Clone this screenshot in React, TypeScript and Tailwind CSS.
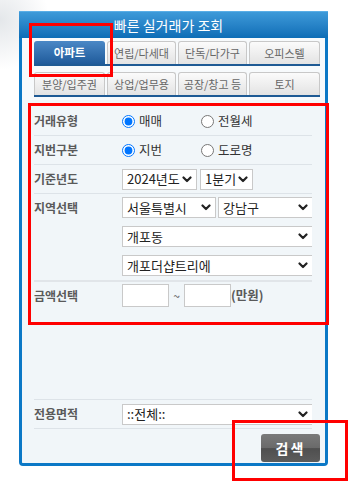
import { useState } from 'react';

const TABS = [
  ['아파트', '연립/다세대', '단독/다가구', '오피스텔'],
  ['분양/입주권', '상업/업무용', '공장/창고 등', '토지'],
];

function Chevron() {
  return (
    <svg width="10" height="7" viewBox="0 0 10 7" className="shrink-0">
      <polyline points="1.5,1.5 5,5 8.5,1.5" fill="none" stroke="#222" strokeWidth="2.2" strokeLinecap="round" strokeLinejoin="round" />
    </svg>
  );
}

function Select({ value, className }: { value: string; className: string }) {
  return (
    <div className={`h-[21px] bg-white border border-[#c9c9c9] flex items-center justify-between pl-[4px] pr-[4px] text-[13px] text-[#222] ${className}`}>
      <span className="truncate">{value}</span>
      <Chevron />
    </div>
  );
}

function Radio({ label, checked, name }: { label: string; checked?: boolean; name: string }) {
  return (
    <label className="flex items-center gap-[4px] text-[12.5px] text-[#333] w-[79px]">
      <input type="radio" name={name} defaultChecked={checked} className="w-[13px] h-[13px] m-0 accent-[#0075ff]" />
      <span>{label}</span>
    </label>
  );
}

export default function App() {
  const [tab] = useState('아파트');

  return (
    <div
      className="relative w-[351px] h-[481px] bg-white overflow-hidden pt-[11px]"
      style={{ fontFamily: '"Noto Sans CJK KR", "Noto Sans", sans-serif' }}
    >
      <div className="absolute left-0 top-0 w-[50px] h-[70px] bg-[radial-gradient(ellipse_at_0_20px,#e4e7ea,transparent_70%)]" />

      {/* panel */}
      <div className="relative ml-[19px] w-[309px] border-x-[3px] border-b-[3px] border-[#0b78c6] rounded-b-[4px] bg-[#f1f6f9]">
        <div className="-mx-[3px] h-[27px] bg-gradient-to-b from-[#3d9ad9] to-[#0c6db6] border-t border-[#5aaee6] flex items-center justify-center text-white text-[14px] pr-[10px]">
          빠른 실거래가 조회
        </div>

        {/* tabs */}
        <div className="bg-[#f7fafc] px-[12px] pt-[3px] pb-[3px]">
          {TABS.map((row, i) => (
            <div key={i} className={`grid grid-cols-[71px_69px_69px_71px] gap-[2px] border-b-2 border-[#1e5a94] ${i === 0 ? 'mb-[6px]' : ''} w-[286px]`}>
              {row.map((t) => (
                <div
                  key={t}
                  className={
                    t === tab
                      ? 'h-[23px] rounded-t-[3px] bg-gradient-to-b from-[#4a88c6] to-[#1f5b9b] text-white font-bold text-[11.5px] flex items-center justify-center'
                      : 'h-[23px] rounded-t-[3px] border border-b-0 border-[#c8c8c8] bg-gradient-to-b from-[#fbfbfb] to-[#e3e3e3] text-[#666] text-[11px] flex items-center justify-center'
                  }
                >
                  {t}
                </div>
              ))}
            </div>
          ))}
        </div>

        {/* form */}
        <div className="pl-[12px] pr-[13px] pt-[7px] text-[12px]">
          <div className="h-[29px] flex items-center border-b border-[#dde3e8]">
            <div className="w-[88px] font-bold text-[#5a5a5a]">거래유형</div>
            <Radio name="t" label="매매" checked />
            <Radio name="t" label="전월세" />
          </div>
          <div className="h-[29px] flex items-center border-b border-[#dde3e8]">
            <div className="w-[88px] font-bold text-[#5a5a5a]">지번구분</div>
            <Radio name="j" label="지번" checked />
            <Radio name="j" label="도로명" />
          </div>
          <div className="h-[29px] flex items-center border-b border-[#dde3e8]">
            <div className="w-[88px] font-bold text-[#5a5a5a]">기준년도</div>
            <Select value="2024년도" className="w-[75px]" />
            <Select value="1분기" className="w-[53px] ml-[3px]" />
          </div>
          <div className="flex pt-[3px] pb-[4px] border-b-2 border-[#e1e5e9]">
            <div className="w-[88px] font-bold text-[#5a5a5a] h-[21px] flex items-center">지역선택</div>
            <div className="flex-1 flex flex-col gap-[8px]">
              <div className="flex">
                <Select value="서울특별시" className="w-[94px]" />
                <Select value="강남구" className="flex-1 ml-[2px] border-r-0" />
              </div>
              <Select value="개포동" className="border-r-0" />
              <Select value="개포더샵트리에" className="border-r-0" />
            </div>
          </div>
          <div className="flex items-center pt-[2px]">
            <div className="w-[88px] font-bold text-[#5a5a5a]">금액선택</div>
            <input className="w-[47px] h-[23px] bg-white border border-[#c9c9c9]" />
            <span className="w-[15px] text-center text-[#555]">~</span>
            <input className="w-[47px] h-[23px] bg-white border border-[#c9c9c9]" />
            <span className="font-bold text-[#5a5a5a] text-[12.5px]">(만원)</span>
          </div>

          <div className="h-[92px]" />

          <div className="h-[30px] flex items-center border-y border-[#dde3e8]">
            <div className="w-[88px] font-bold text-[#5a5a5a]">전용면적</div>
            <Select value="::전체::" className="flex-1 border-r-0" />
          </div>
        </div>

        <div className="flex justify-end pr-[5px] pt-[5px] pb-[1px]">
          <button className="w-[59px] h-[28px] rounded-[3px] bg-[linear-gradient(#7a7a7a,#6a6a6a_50%,#4f4f4f_52%,#5c5c5c)] text-white font-bold text-[14px] tracking-[2px]">
            검색
          </button>
        </div>
      </div>

      {/* annotation boxes */}
      <div className="absolute left-[29px] top-[23px] w-[84px] h-[54px] border-[3px] border-[#ff0000]" />
      <div className="absolute left-[28px] top-[103px] w-[301px] h-[222px] border-[3px] border-[#ff0000]" />
      <div className="absolute left-[232px] top-[420px] w-[116px] h-[61px] border-[3px] border-[#ff0000]" />
    </div>
  );
}
